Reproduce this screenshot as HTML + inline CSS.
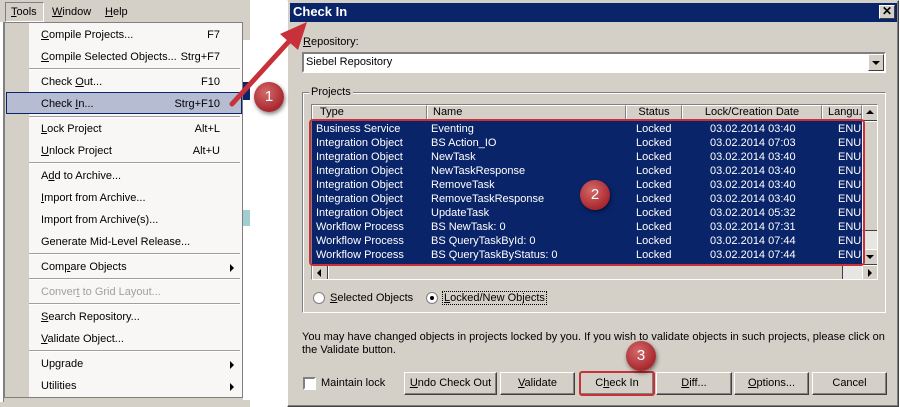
<!DOCTYPE html>
<html><head><style>
*{margin:0;padding:0;box-sizing:border-box}
body{width:900px;height:407px;background:#fff;position:relative;overflow:hidden;font-family:"Liberation Sans",sans-serif;font-size:11px;color:#000}
.a{position:absolute}
.mi{position:absolute;left:36px;font-size:11px;white-space:nowrap;margin-top:1px}
.sc{position:absolute;right:22px;white-space:nowrap;margin-top:1px}
.sep{position:absolute;left:24px;right:2px;height:2px;border-top:1px solid #a0a0a0;border-bottom:1px solid #fff}
.tri{position:absolute;right:8px;width:0;height:0;border-left:4px solid #000;border-top:4px solid transparent;border-bottom:4px solid transparent}
.btn{position:absolute;top:372px;height:23px;background:#d4d0c8;border:1px solid;border-color:#fff #404040 #404040 #fff;box-shadow:inset -1px -1px #808080;text-align:center;line-height:20px;font-size:11px}
.row{position:absolute;left:0;height:14px;line-height:14px;color:#fff;white-space:nowrap;font-size:11px}
.row span{position:absolute}
.hd{position:absolute;top:0;height:15px;background:#d4d0c8;border:1px solid;border-color:#fff #808080 #808080 #fff;line-height:13px;font-size:11px}
.circ{position:absolute;width:30px;height:30px;border-radius:50%;background:radial-gradient(circle at 40% 35%,#d46a6a,#a8282e 70%);color:#fff;font-size:15px;text-align:center;line-height:30px;box-shadow:1px 2px 4px rgba(0,0,0,.5)}
</style></head><body>
<div class="a" style="left:0;top:0;width:250px;height:407px;background:#d4d0c8"></div>
<div class="a" style="left:243px;top:40px;width:7px;height:360px;background:#fff"></div>
<div class="a" style="left:243px;top:82px;width:7px;height:18px;background:#0a246a"></div>
<div class="a" style="left:243px;top:210px;width:7px;height:16px;background:#9fcfd0"></div>
<div class="a" style="left:0;top:22px;width:4px;height:380px;background:#fff;border-right:1px solid #808080"></div>
<div class="a" style="left:5px;top:2px;width:39px;height:20px;border:1px solid;border-color:#808080 #fff #fff #808080"></div>
<div class="a" style="left:11px;top:6px"><u>T</u>ools</div>
<div class="a" style="left:52px;top:6px"><u>W</u>indow</div>
<div class="a" style="left:105px;top:6px"><u>H</u>elp</div>
<div class="a" style="left:4px;top:22px;width:239px;height:376px;background:#f8f7f5;border:1px solid #808080">
<div class="a" style="left:0;top:0;width:24px;height:374px;background:#d4d0c8"></div>
<div class="mi" style="top:5px"><u>C</u>ompile Projects...</div><div class="sc" style="top:5px">F7</div>
<div class="mi" style="top:27px"><u>C</u>ompile Selected Objects...</div><div class="sc" style="top:27px">Strg+F7</div>
<div class="sep" style="top:45px"></div>
<div class="mi" style="top:52px">Check <u>O</u>ut...</div><div class="sc" style="top:52px">F10</div>
<div class="a" style="left:1px;top:69px;width:236px;height:22px;background:#b6bdd2;border:1px solid #0a246a"></div>
<div class="mi" style="top:74px">Check <u>I</u>n...</div><div class="sc" style="top:74px">Strg+F10</div>
<div class="sep" style="top:93px"></div>
<div class="mi" style="top:99px"><u>L</u>ock Project</div><div class="sc" style="top:99px">Alt+L</div>
<div class="mi" style="top:121px"><u>U</u>nlock Project</div><div class="sc" style="top:121px">Alt+U</div>
<div class="sep" style="top:139px"></div>
<div class="mi" style="top:146px">A<u>d</u>d to Archive...</div>
<div class="mi" style="top:168px"><u>I</u>mport from Archive...</div>
<div class="mi" style="top:190px">Import from Archive(s)...</div>
<div class="mi" style="top:212px">Generate Mid-Level Release...</div>
<div class="sep" style="top:230px"></div>
<div class="mi" style="top:237px">Com<u>p</u>are Objects</div><div class="tri" style="top:241px"></div>
<div class="sep" style="top:255px"></div>
<div class="mi" style="top:262px;color:#a0a0a0">Conver<u>t</u> to Grid Layout...</div>
<div class="sep" style="top:280px"></div>
<div class="mi" style="top:287px"><u>S</u>earch Repository...</div>
<div class="mi" style="top:309px"><u>V</u>alidate Object...</div>
<div class="sep" style="top:327px"></div>
<div class="mi" style="top:334px">Upgrade</div><div class="tri" style="top:338px"></div>
<div class="mi" style="top:356px">Utilities</div><div class="tri" style="top:360px"></div>
</div>
<div class="a" style="left:287px;top:0;width:612px;height:407px;background:#d4d0c8;border:1px solid;border-color:#d4d0c8 #404040 #404040 #fff;box-shadow:inset -1px -1px #808080"></div>
<div class="a" style="left:290px;top:3px;width:607px;height:19px;background:#0a246a"></div>
<div class="a" style="left:293px;top:4px;color:#fff;font-weight:bold;font-size:13px">Check In</div>
<div class="a" style="left:879px;top:5px;width:16px;height:14px;background:#d4d0c8;border:1px solid;border-color:#fff #404040 #404040 #fff;text-align:center;line-height:11px;font-weight:bold;font-size:12px">✕</div>
<div class="a" style="left:303px;top:36px"><u>R</u>epository:</div>
<div class="a" style="left:302px;top:52px;width:584px;height:21px;background:#fff;border:2px solid;border-color:#808080 #fff #fff #808080"></div>
<div class="a" style="left:306px;top:56px">Siebel Repository</div>
<div class="a" style="left:868px;top:54px;width:16px;height:17px;background:#d4d0c8;border:1px solid;border-color:#fff #404040 #404040 #fff"><div class="a" style="left:3px;top:6px;border-top:4px solid #000;border-left:4px solid transparent;border-right:4px solid transparent"></div></div>
<div class="a" style="left:302px;top:92px;width:584px;height:221px;border:1px solid;border-color:#808080 #fff #fff #808080;box-shadow:inset 1px 1px #fff,1px 1px #808080 inset"></div>
<div class="a" style="left:309px;top:86px;background:#d4d0c8;padding:0 2px">Projects</div>
<div class="a" style="left:311px;top:104px;width:567px;height:176px;background:#fff;border:1px solid;border-color:#808080 #fff #fff #808080;overflow:hidden">
 <div class="hd" style="left:0;width:115px;padding-left:7px">Type</div>
 <div class="hd" style="left:115px;width:199px;padding-left:5px">Name</div>
 <div class="hd" style="left:314px;width:56px;text-align:center">Status</div>
 <div class="hd" style="left:370px;width:140px;text-align:center">Lock/Creation Date</div>
 <div class="hd" style="left:510px;width:40px;padding-left:5px">Langu.</div>
 <div class="a" style="left:0;top:15px;width:550px;height:146px;background:#0a246a"></div>
 <div class="a" style="left:0;top:17px;width:550px;height:146px;overflow:hidden">
  <div class="row" style="top:0"><span style="left:4px">Business Service</span><span style="left:119px">Eventing</span><span style="left:324px">Locked</span><span style="left:398px">03.02.2014 03:40</span><span style="left:526px">ENU</span></div>
  <div class="row" style="top:14px"><span style="left:4px">Integration Object</span><span style="left:119px">BS Action_IO</span><span style="left:324px">Locked</span><span style="left:398px">03.02.2014 07:03</span><span style="left:526px">ENU</span></div>
  <div class="row" style="top:28px"><span style="left:4px">Integration Object</span><span style="left:119px">NewTask</span><span style="left:324px">Locked</span><span style="left:398px">03.02.2014 03:40</span><span style="left:526px">ENU</span></div>
  <div class="row" style="top:42px"><span style="left:4px">Integration Object</span><span style="left:119px">NewTaskResponse</span><span style="left:324px">Locked</span><span style="left:398px">03.02.2014 03:40</span><span style="left:526px">ENU</span></div>
  <div class="row" style="top:56px"><span style="left:4px">Integration Object</span><span style="left:119px">RemoveTask</span><span style="left:324px">Locked</span><span style="left:398px">03.02.2014 03:40</span><span style="left:526px">ENU</span></div>
  <div class="row" style="top:70px"><span style="left:4px">Integration Object</span><span style="left:119px">RemoveTaskResponse</span><span style="left:324px">Locked</span><span style="left:398px">03.02.2014 03:40</span><span style="left:526px">ENU</span></div>
  <div class="row" style="top:84px"><span style="left:4px">Integration Object</span><span style="left:119px">UpdateTask</span><span style="left:324px">Locked</span><span style="left:398px">03.02.2014 05:32</span><span style="left:526px">ENU</span></div>
  <div class="row" style="top:98px"><span style="left:4px">Workflow Process</span><span style="left:119px">BS NewTask: 0</span><span style="left:324px">Locked</span><span style="left:398px">03.02.2014 07:31</span><span style="left:526px">ENU</span></div>
  <div class="row" style="top:112px"><span style="left:4px">Workflow Process</span><span style="left:119px">BS QueryTaskById: 0</span><span style="left:324px">Locked</span><span style="left:398px">03.02.2014 07:44</span><span style="left:526px">ENU</span></div>
  <div class="row" style="top:126px"><span style="left:4px">Workflow Process</span><span style="left:119px">BS QueryTaskByStatus: 0</span><span style="left:324px">Locked</span><span style="left:398px">03.02.2014 07:44</span><span style="left:526px">ENU</span></div>
 </div>
 <div class="a" style="left:550px;top:0;width:16px;height:160px;background:#e8e6e2"></div>
 <div class="a" style="left:550px;top:0;width:16px;height:16px;background:#d4d0c8;border:1px solid;border-color:#fff #404040 #404040 #fff"><div class="a" style="left:3px;top:4px;border-bottom:4px solid #000;border-left:4px solid transparent;border-right:4px solid transparent"></div></div>
 <div class="a" style="left:550px;top:16px;width:16px;height:110px;background:#d4d0c8;border:1px solid;border-color:#fff #404040 #404040 #fff"></div>
 <div class="a" style="left:550px;top:144px;width:16px;height:16px;background:#d4d0c8;border:1px solid;border-color:#fff #404040 #404040 #fff"><div class="a" style="left:3px;top:5px;border-top:4px solid #000;border-left:4px solid transparent;border-right:4px solid transparent"></div></div>
 <div class="a" style="left:0;top:160px;width:566px;height:16px;background:#e8e6e2"></div>
 <div class="a" style="left:0;top:160px;width:16px;height:16px;background:#d4d0c8;border:1px solid;border-color:#fff #404040 #404040 #fff"><div class="a" style="left:4px;top:3px;border-right:4px solid #000;border-top:4px solid transparent;border-bottom:4px solid transparent"></div></div>
 <div class="a" style="left:16px;top:160px;width:515px;height:16px;background:#d4d0c8;border:1px solid;border-color:#fff #404040 #404040 #fff"></div>
 <div class="a" style="left:550px;top:160px;width:16px;height:16px;background:#d4d0c8;border:1px solid;border-color:#fff #404040 #404040 #fff"><div class="a" style="left:5px;top:3px;border-left:4px solid #000;border-top:4px solid transparent;border-bottom:4px solid transparent"></div></div>
</div>
<div class="a" style="left:309px;top:119px;width:556px;height:147px;border:2px solid #c8303a;border-radius:4px"></div>
<div class="a" style="left:313px;top:292px;width:12px;height:12px;border-radius:50%;background:#fff;border:1px solid #808080"></div>
<div class="a" style="left:330px;top:292px"><u>S</u>elected Objects</div>
<div class="a" style="left:426px;top:292px;width:12px;height:12px;border-radius:50%;background:#fff;border:1px solid #808080"><div class="a" style="left:3px;top:3px;width:4px;height:4px;background:#000;border-radius:50%"></div></div>
<div class="a" style="left:442px;top:291px;border:1px dotted #000;padding:0 1px"><u>L</u>ocked/New Objects</div>
<div class="a" style="left:302px;top:331px;line-height:13px;width:590px">You may have changed objects in projects locked by you. If you wish to validate objects in such projects, please click on the Validate button.</div>
<div class="a" style="left:303px;top:377px;width:13px;height:13px;background:#fff;border:2px solid;border-color:#808080 #fff #fff #808080"></div>
<div class="a" style="left:321px;top:377px">Maintain lock</div>
<div class="btn" style="left:404px;width:93px"><u>U</u>ndo Check Out</div>
<div class="btn" style="left:500px;width:75px"><u>V</u>alidate</div>
<div class="btn" style="left:580px;width:74px">C<u>h</u>eck In</div>
<div class="a" style="left:579px;top:371px;width:76px;height:25px;border:2px solid #c8303a;border-radius:3px"></div>
<div class="btn" style="left:656px;width:76px"><u>D</u>iff...</div>
<div class="btn" style="left:734px;width:75px"><u>O</u>ptions...</div>
<div class="btn" style="left:812px;width:75px">Cancel</div>
<svg class="a" style="left:0;top:0" width="900" height="407"><line x1="232" y1="104" x2="292" y2="38" stroke="#c8303a" stroke-width="5" stroke-linecap="round"/><polygon points="307,22 280,34 298,50" fill="#c8303a"/></svg>
<div class="circ" style="left:254px;top:82px">1</div>
<div class="circ" style="left:580px;top:180px">2</div>
<div class="circ" style="left:626px;top:341px">3</div>
</body></html>
